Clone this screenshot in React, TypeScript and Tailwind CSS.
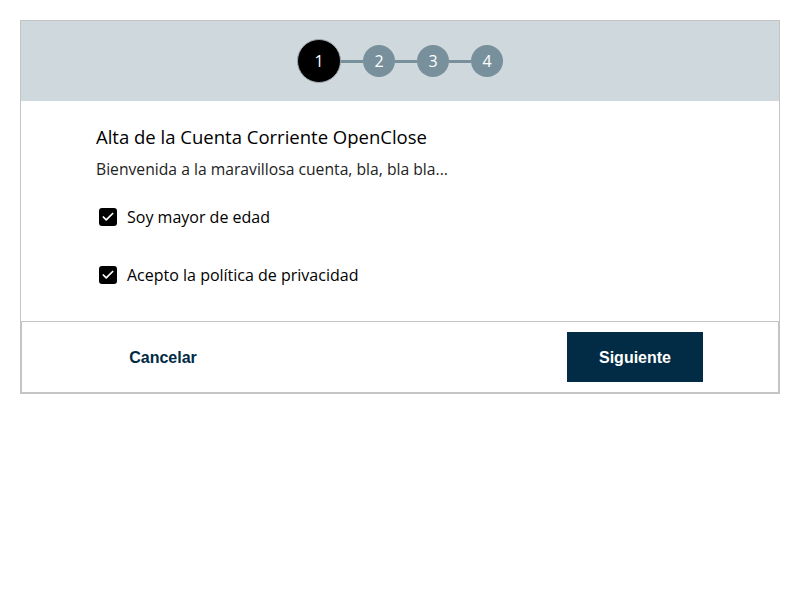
import { Check } from 'lucide-react';

const steps = [1, 2, 3, 4];

export default function App() {
  return (
    <div className="w-[800px] h-[600px] bg-white pt-5 px-5" style={{ fontFamily: '"Open Sans", Lato, sans-serif' }}>
      <div className="border-x border-t border-[#c4c4c4]">
        <div className="h-20 bg-[#cfd8dc] flex items-center justify-center">
          <div className="flex items-center">
            {steps.map((n, i) => (
              <div key={n} className="flex items-center">
                {i > 0 && <div className="w-[22px] h-[3px] bg-[#78909c]" />}
                {n === 1 ? (
                  <div className="w-11 h-11 rounded-full bg-black border border-[#9aa5ab] flex items-center justify-center text-white text-base font-medium">
                    {n}
                  </div>
                ) : (
                  <div className="w-8 h-8 rounded-full bg-[#78909c] flex items-center justify-center text-white text-base font-medium">
                    {n}
                  </div>
                )}
              </div>
            ))}
          </div>
        </div>
        <div className="pl-[75px] pt-[24px] pb-[36px]">
          <h1 className="text-[18.5px] leading-6 text-black">Alta de la Cuenta Corriente OpenClose</h1>
          <p className="mt-[10px] text-[15.7px] leading-5 text-[#222]">Bienvenida a la maravillosa cuenta, bla, bla bla...</p>
          <div className="mt-[28px] flex flex-col gap-[38px]">
            {['Soy mayor de edad', 'Acepto la política de privacidad'].map((label) => (
              <label key={label} className="flex items-center gap-[10px] pl-[3px]">
                <span className="w-[18px] h-[18px] rounded-[3px] bg-black flex items-center justify-center">
                  <Check className="w-[14px] h-[14px] text-white" strokeWidth={3} />
                </span>
                <span className="text-[16px] leading-5 text-black font-medium">{label}</span>
              </label>
            ))}
          </div>
        </div>
      </div>
      <div className="h-[73px] border-t border-x-2 border-b-2 border-[#c4c4c4] flex items-center justify-between pl-[73px] pr-[75px]" style={{ fontFamily: '"Liberation Sans", Arial, sans-serif' }}>
        <button className="w-[136px] h-[50px] pt-[2px] text-[#002a45] font-bold text-base">Cancelar</button>
        <button className="w-[136px] h-[50px] pt-[2px] bg-[#022b45] text-white font-bold text-base">Siguiente</button>
      </div>
    </div>
  );
}
